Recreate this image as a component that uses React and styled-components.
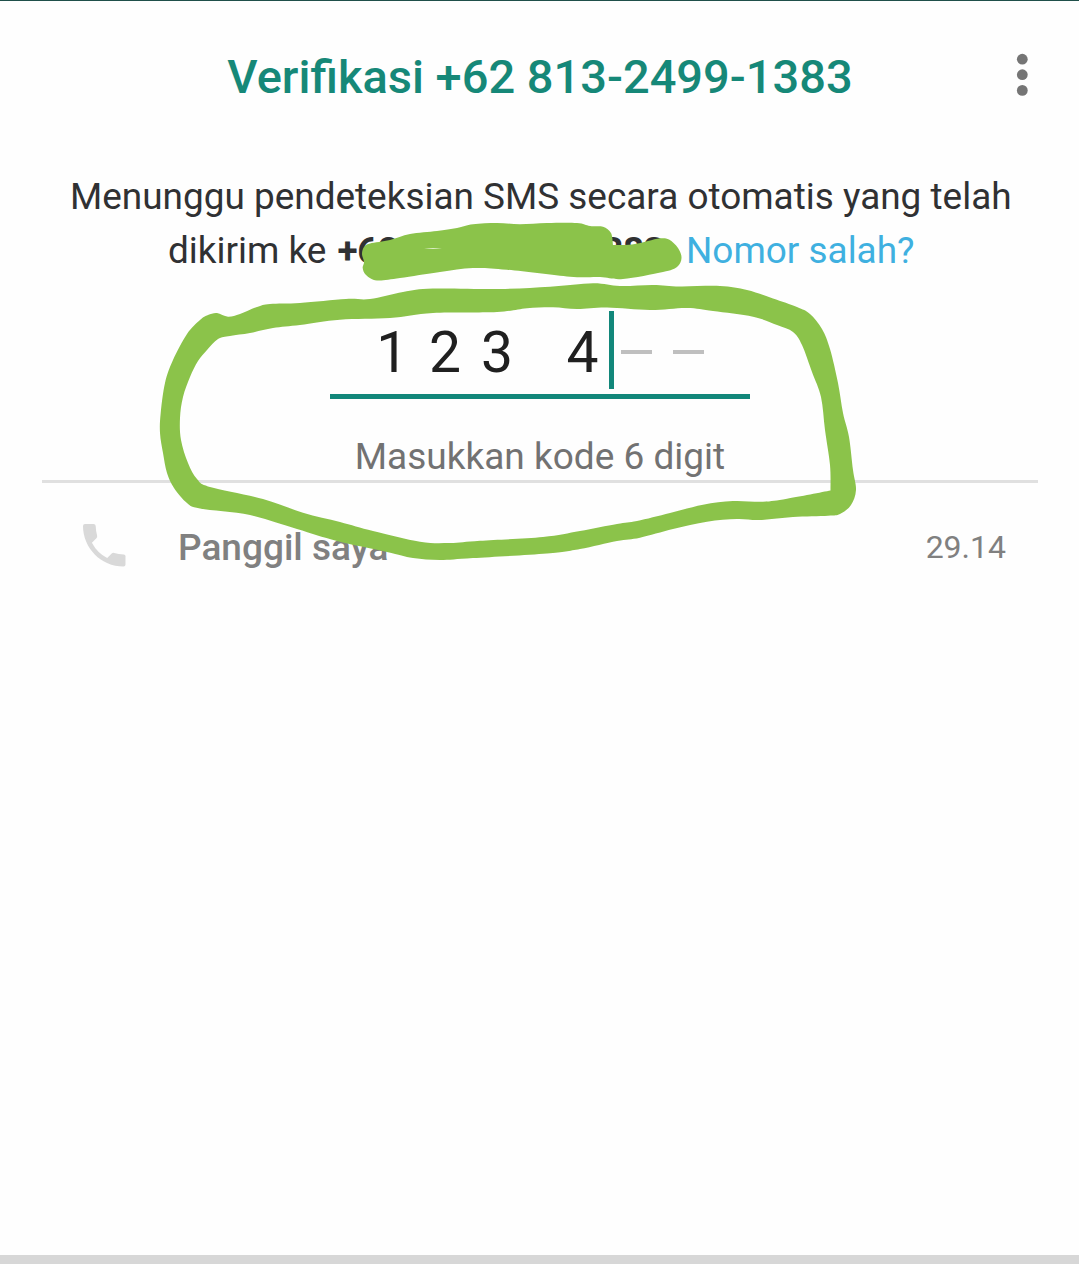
import React from "react";
import styled, { createGlobalStyle } from "styled-components";

const GlobalStyle = createGlobalStyle`
  * { box-sizing: border-box; }
  body { margin: 0; background: #fefefe; font-family: Roboto, "Noto Sans", sans-serif; }
`;

const Screen = styled.main`
  position: relative;
  display: flex;
  flex-direction: column;
  width: 1079px;
  height: 1264px;
  overflow: hidden;
  background: #fefefe;
  border-top: 1px solid #1f4f4a;
  border-bottom: 9px solid #d7d7d7;
`;

const Header = styled.header`
  display: grid;
  grid-template-columns: 114px 1fr 114px;
  align-items: center;
  height: 148px;
`;

const Title = styled.h1`
  grid-column: 2;
  margin: 0;
  padding: 3px 0 0 1px;
  text-align: center;
  white-space: nowrap;
  font-size: 47px;
  font-weight: 500;
  line-height: 56px;
  color: #168878;
`;

const MenuButton = styled.button`
  justify-self: center;
  display: flex;
  padding: 0;
  border: 0;
  background: none;
`;

const Message = styled.p`
  display: flex;
  flex-direction: column;
  margin: 21px 0 0;
  font-size: 36.93px;
  line-height: 54px;
  color: #303133;
`;

const Line = styled.span`
  padding-left: ${(p) => p.$indent}px;
  white-space: nowrap;
`;

const PhoneNumber = styled.b`
  margin-left: 2px;
  letter-spacing: -0.4px;
`;

const Link = styled.a`
  margin-left: 2.5px;
  color: #3fb0e0;
`;

const CodeField = styled.div`
  display: flex;
  align-items: center;
  align-self: center;
  width: 420px;
  height: 92px;
  margin: 29px 0 0;
  padding: 0 0 2px 36px;
  border-bottom: 5px solid #12877a;
`;

const Digit = styled.span`
  flex: none;
  width: ${(p) => p.$width || 52}px;
  margin-left: ${(p) => (p.$gap ? 33.5 : 0)}px;
  padding-top: 6px;
  text-align: center;
  font-size: 57px;
  line-height: 68px;
  color: #202020;
`;

const Cursor = styled.span`
  flex: none;
  width: 5px;
  height: 78px;
  margin-right: 7px;
  background: #12877a;
`;

const Dash = styled.span`
  flex: none;
  width: 31px;
  height: 4px;
  margin: 4px 21px 0 0;
  background: #bfbfbf;
`;

const Hint = styled.p`
  margin: 36px 0 0;
  padding-left: 1px;
  text-align: center;
  font-size: 37px;
  line-height: 44px;
  color: #727272;
`;

const Divider = styled.hr`
  width: 996px;
  height: 3px;
  margin: 1px auto 0 42px;
  border: 0;
  background: #e0e0e0;
`;

const CallRow = styled.div`
  display: flex;
  align-items: center;
  height: 128px;
  padding: 0 73px 0 83px;
`;

const PhoneIcon = styled.svg`
  margin-bottom: 3px;
`;

const CallLabel = styled.span`
  margin-left: 52px;
  font-size: 37px;
  font-weight: 500;
  color: #808080;
`;

const Timer = styled.time`
  margin-left: auto;
  font-size: 32px;
  color: #808080;
`;

const Scribbles = styled.svg`
  position: absolute;
  top: -1px;
  left: 0;
  pointer-events: none;
`;

const outer = [[200,320],[208,315],[217,313],[228,316.7],[240,314],[257,307],[270,304],[300,303],[346,299],[370,299],[403,292],[433,288.5],[500,289],[550,286.7],[593,283.3],[620,286],[653,285],[680,286.5],[720,286],[747,290],[773,298.5],[797,307],[810,314],[822,329],[830,349],[838,383],[843,413],[849,437],[853,470],[856,490],[851,505],[840,514],[828,515.7],[793,517],[760,520],[737,519],[707,521.7],[673,529],[640,537.7],[617,541],[580,549],[547,553.5],[473,558],[440,560],[413,558],[387,552],[337,541],[297,529],[250,515],[200,508.5],[187,503],[174,488],[167,473],[163,453],[160,433],[160.7,413],[165,383],[173,360],[187,334]];
const inner = [[218,339],[230,336],[250,333],[273,328],[300,325],[340,319.7],[390,318],[433,313],[497,312],[527,308.3],[553,307.3],[577,309],[607,307.5],[650,310],[687,308],[713,311],[753,316.7],[777,325],[793,332],[802,345],[812,372],[821,397],[825,430],[830,465],[830.5,490.5],[830.5,490.5],[787,498.7],[763,501.7],[733,501],[703,504.7],[670,513],[637,521],[617,524],[580,531],[543,537],[480,540.7],[450,543],[420,541.7],[373,531],[340,522],[303,512.7],[263,499],[210,487],[197,479],[188,463],[181,440],[180,418],[183,397],[190,377],[198,361],[207,350]];
const cover = [[362,254],[364,247],[370,243.5],[390,240],[410,234],[437,231],[457,228],[473,224.3],[497,223],[520,224.3],[547,223],[577,223],[590,226],[603,226.7],[611,233],[613,245],[613,245],[632,244.5],[648,241],[660,238.3],[669,239.5],[678,248],[681.5,258],[677,267],[663,272],[623,279],[600,277],[570,276.7],[507,269.7],[473,268],[440,272],[400,278],[377,280.5],[366,275],[362.7,268],[364,262]];

// Closed curve through the points; a point given twice in a row is a sharp corner.
function smooth(points) {
  const n = points.length;
  const at = (i) => points[(i + n) % n];
  let d = `M${points[0].join(" ")}`;
  for (let i = 0; i < n; i++) {
    const [a, b, c, e] = [at(i - 1), at(i), at(i + 1), at(i + 2)];
    if (b[0] === c[0] && b[1] === c[1]) continue;
    d += `C${b[0] + (c[0] - a[0]) / 6} ${b[1] + (c[1] - a[1]) / 6} ${c[0] - (e[0] - b[0]) / 6} ${c[1] - (e[1] - b[1]) / 6} ${c[0]} ${c[1]}`;
  }
  return d + "Z";
}

export default function App() {
  return (
    <Screen>
      <GlobalStyle />
      <Header>
        <Title>Verifikasi +62 813-2499-1383</Title>
        <MenuButton aria-label="Menu">
          <svg width="12" height="44" viewBox="0 0 12 44" fill="#757575">
            <circle cx="6.3" cy="6.2" r="5.4" />
            <circle cx="6.3" cy="21.7" r="5.4" />
            <circle cx="6.3" cy="37.4" r="5.4" />
          </svg>
        </MenuButton>
      </Header>
      <Message>
        <Line $indent={70}>Menunggu pendeteksian SMS secara otomatis yang telah</Line>
        <Line $indent={168}>
          dikirim ke <PhoneNumber>+62 813-2499-1383</PhoneNumber>. <Link>Nomor salah?</Link>
        </Line>
      </Message>
      <CodeField>
        <Digit $width={53.5}>1</Digit>
        <Digit>2</Digit>
        <Digit>3</Digit>
        <Digit $gap>4</Digit>
        <Cursor />
        <Dash />
        <Dash />
      </CodeField>
      <Hint>Masukkan kode 6 digit</Hint>
      <Divider />
      <CallRow>
        <PhoneIcon width="43" height="43" viewBox="0 0 43 43" fill="#d9d9d9">
          <path d="M2 0H10.5Q12.5 0 12.7 2Q12.9 7.5 14.1 11.6Q14.5 13.2 13.4 14.3L8.9 18.8Q14.3 29 24.2 34.1L28.7 29.6Q29.8 28.5 31.2 29Q35.5 30.3 40.8 30.4Q42.5 30.5 42.5 32.2V40.5Q42.5 42.5 40.5 42.5C18 42.5 0 24 0 2Q0 0 2 0Z" />
        </PhoneIcon>
        <CallLabel>Panggil saya</CallLabel>
        <Timer>29.14</Timer>
      </CallRow>
      <Scribbles width="1079" height="620" viewBox="0 0 1079 620" fill="#8bc34a">
        <path fillRule="evenodd" d={smooth(outer) + smooth(inner)} />
        <path d={smooth(cover)} />
        <path fill="#dcefc6" d="M424 248.8Q433 247.4 442 248.8Q433 249.1 424 248.8Z" />
      </Scribbles>
    </Screen>
  );
}
